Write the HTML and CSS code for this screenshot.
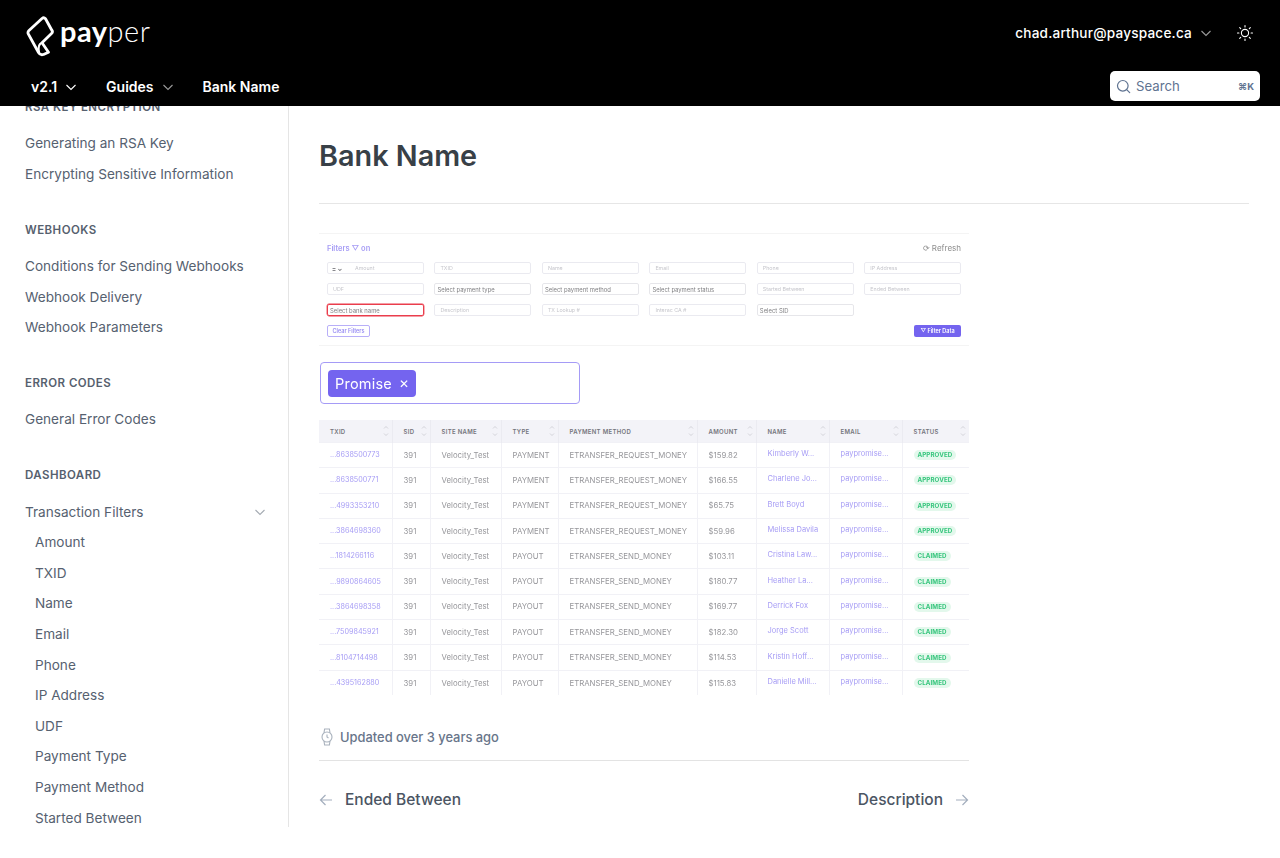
FILE: index.html
```html
<!DOCTYPE html>
<html lang="en">
<head>
  <meta charset="UTF-8">
  <title>Bank Name</title>
  <link rel="stylesheet" href="styles.css">
</head>
<body>
  <svg class="sprite" width="0" height="0">
    <symbol id="chev" viewBox="0 0 12 12"><path d="M1.5 4l4.500 4.500L10.500 4" fill="none" stroke="currentColor" stroke-width="1.100"/></symbol>
    <symbol id="sort" viewBox="0 0 6 14"><path d="M1 4.500L3 2.500l2 2M1 9.500l2 2 2-2" fill="none" stroke="currentColor" stroke-width=".6"/></symbol>
  </svg>

  <header class="topbar">
    <div class="topbar-row">
      <a class="logo">
        <svg class="logo-mark" width="29" height="41" viewBox="0 0 29 41">
          <path d="M16 2.500L3 14.500c-1.200 1.200-1.300 2.400-.6 3.700L12.500 36.500c1.300 2.200 2.800 2.700 5 2l5-2.300-6.500-9.500 9.500-9.200c1.300-1.200 1.200-2.300.2-3.500L19.500 2.800c-1.100-1.200-2.300-1.300-3.500-.3z" fill="none" stroke="#fff" stroke-width="2.800" stroke-linejoin="round"/>
          <path d="M16 26.700c-3 1-4.300 3.500-3 9.800" fill="none" stroke="#fff" stroke-width="2.200"/>
        </svg>
        <span class="logo-text"><b>pay</b>per</span>
      </a>
      <div class="account">
        <span class="email">chad.arthur@payspace.ca</span>
        <svg class="chev-sm" width="12" height="12"><use href="#chev"/></svg>
        <svg class="sun" width="18" height="18" viewBox="0 0 18 18" fill="none" stroke="#fff" stroke-width="1.100" stroke-linecap="round">
          <circle cx="9" cy="9" r="3.600"/>
          <path d="M9 1.500v1.400M9 15.100v1.400M1.500 9h1.400M15.100 9h1.400M3.700 3.700l1 1M13.300 13.300l1 1M3.700 14.300l1-1M13.300 4.700l1-1"/>
        </svg>
      </div>
    </div>
    <div class="topbar-row nav-row">
      <nav class="nav">
        <a class="nav-item">v2.1 <svg width="12" height="12"><use href="#chev"/></svg></a>
        <a class="nav-item">Guides <svg class="dim" width="12" height="12"><use href="#chev"/></svg></a>
        <a class="nav-item">Bank Name</a>
      </nav>
      <div class="search">
        <svg width="15" height="15" viewBox="0 0 15 15" fill="none" stroke="#5f7391" stroke-width="1.200" stroke-linecap="round"><circle cx="6.800" cy="6.800" r="5.300"/><path d="M10.700 10.700l3 3"/></svg>
        <span class="search-label">Search</span>
        <span class="search-key">⌘K</span>
      </div>
    </div>
  </header>

  <div id="container">
    <aside id="sidebar">
      <div class="side-inner">
        <section class="side-group">
          <h4>RSA Key Encryption</h4>
          <a>Generating an RSA Key</a>
          <a>Encrypting Sensitive Information</a>
        </section>
        <section class="side-group">
          <h4>Webhooks</h4>
          <a>Conditions for Sending Webhooks</a>
          <a>Webhook Delivery</a>
          <a>Webhook Parameters</a>
        </section>
        <section class="side-group">
          <h4>Error Codes</h4>
          <a>General Error Codes</a>
        </section>
        <section class="side-group">
          <h4>Dashboard</h4>
          <a class="side-parent">Transaction Filters <svg width="12" height="12"><use href="#chev"/></svg></a>
          <div class="side-sub">
            <a>Amount</a>
            <a>TXID</a>
            <a>Name</a>
            <a>Email</a>
            <a>Phone</a>
            <a>IP Address</a>
            <a>UDF</a>
            <a>Payment Type</a>
            <a>Payment Method</a>
            <a>Started Between</a>
          </div>
        </section>
      </div>
    </aside>

    <main id="content">
      <h1>Bank Name</h1>
      <hr class="title-rule">

      <div class="shot">
        <div class="filters">
          <div class="filters-head">
            <span class="filters-title">Filters ▽ on</span>
            <span class="refresh">⟳ Refresh</span>
          </div>
          <div class="filters-grid">
            <div class="fld split"><span class="op">= ⌄</span><span class="ph">Amount</span></div>
            <div class="fld"><span class="ph">TXID</span></div>
            <div class="fld"><span class="ph">Name</span></div>
            <div class="fld"><span class="ph">Email</span></div>
            <div class="fld"><span class="ph">Phone</span></div>
            <div class="fld"><span class="ph">IP Address</span></div>
            <div class="fld"><span class="ph">UDF</span></div>
            <div class="fld sel">Select payment type</div>
            <div class="fld sel">Select payment method</div>
            <div class="fld sel">Select payment status</div>
            <div class="fld"><span class="ph">Started Between</span></div>
            <div class="fld"><span class="ph">Ended Between</span></div>
            <div class="fld sel marked">Select bank name</div>
            <div class="fld"><span class="ph">Description</span></div>
            <div class="fld"><span class="ph">TX Lookup #</span></div>
            <div class="fld"><span class="ph">Interac CA #</span></div>
            <div class="fld sel">Select SID</div>
          </div>
          <div class="filters-actions">
            <span class="btn-outline">Clear Filters</span>
            <span class="btn-solid">▽ Filter Data</span>
          </div>
        </div>

        <div class="tag-box">
          <span class="tag">Promise <i>✕</i></span>
        </div>

        <table class="txn">
          <colgroup>
            <col class="c1"><col class="c2"><col class="c3"><col class="c4"><col class="c5"><col class="c6"><col class="c7"><col class="c8"><col class="c9">
          </colgroup>
          <thead>
            <tr>
              <th>TXID<svg width="6" height="14"><use href="#sort"/></svg></th>
              <th>SID<svg width="6" height="14"><use href="#sort"/></svg></th>
              <th>SITE NAME<svg width="6" height="14"><use href="#sort"/></svg></th>
              <th>TYPE<svg width="6" height="14"><use href="#sort"/></svg></th>
              <th>PAYMENT METHOD<svg width="6" height="14"><use href="#sort"/></svg></th>
              <th>AMOUNT<svg width="6" height="14"><use href="#sort"/></svg></th>
              <th>NAME<svg width="6" height="14"><use href="#sort"/></svg></th>
              <th>EMAIL<svg width="6" height="14"><use href="#sort"/></svg></th>
              <th>STATUS<svg width="6" height="14"><use href="#sort"/></svg></th>
            </tr>
          </thead>
          <tbody>
            <tr><td class="lnk">...8638500773</td><td>391</td><td>Velocity_Test</td><td>PAYMENT</td><td>ETRANSFER_REQUEST_MONEY</td><td>$159.82</td><td class="lnk up">Kimberly W...</td><td class="lnk up">paypromise...</td><td><span class="badge">APPROVED</span></td></tr>
            <tr><td class="lnk">...8638500771</td><td>391</td><td>Velocity_Test</td><td>PAYMENT</td><td>ETRANSFER_REQUEST_MONEY</td><td>$166.55</td><td class="lnk up">Charlene Jo...</td><td class="lnk up">paypromise...</td><td><span class="badge">APPROVED</span></td></tr>
            <tr><td class="lnk">...4993353210</td><td>391</td><td>Velocity_Test</td><td>PAYMENT</td><td>ETRANSFER_REQUEST_MONEY</td><td>$65.75</td><td class="lnk up">Brett Boyd</td><td class="lnk up">paypromise...</td><td><span class="badge">APPROVED</span></td></tr>
            <tr><td class="lnk">...3864698360</td><td>391</td><td>Velocity_Test</td><td>PAYMENT</td><td>ETRANSFER_REQUEST_MONEY</td><td>$59.96</td><td class="lnk up">Melissa Davila</td><td class="lnk up">paypromise...</td><td><span class="badge">APPROVED</span></td></tr>
            <tr><td class="lnk">...1814266116</td><td>391</td><td>Velocity_Test</td><td>PAYOUT</td><td>ETRANSFER_SEND_MONEY</td><td>$103.11</td><td class="lnk up">Cristina Law...</td><td class="lnk up">paypromise...</td><td><span class="badge">CLAIMED</span></td></tr>
            <tr><td class="lnk">...9890864605</td><td>391</td><td>Velocity_Test</td><td>PAYOUT</td><td>ETRANSFER_SEND_MONEY</td><td>$180.77</td><td class="lnk up">Heather La...</td><td class="lnk up">paypromise...</td><td><span class="badge">CLAIMED</span></td></tr>
            <tr><td class="lnk">...3864698358</td><td>391</td><td>Velocity_Test</td><td>PAYOUT</td><td>ETRANSFER_SEND_MONEY</td><td>$169.77</td><td class="lnk up">Derrick Fox</td><td class="lnk up">paypromise...</td><td><span class="badge">CLAIMED</span></td></tr>
            <tr><td class="lnk">...7509845921</td><td>391</td><td>Velocity_Test</td><td>PAYOUT</td><td>ETRANSFER_SEND_MONEY</td><td>$182.30</td><td class="lnk up">Jorge Scott</td><td class="lnk up">paypromise...</td><td><span class="badge">CLAIMED</span></td></tr>
            <tr><td class="lnk">...8104714498</td><td>391</td><td>Velocity_Test</td><td>PAYOUT</td><td>ETRANSFER_SEND_MONEY</td><td>$114.53</td><td class="lnk up">Kristin Hoff...</td><td class="lnk up">paypromise...</td><td><span class="badge">CLAIMED</span></td></tr>
            <tr><td class="lnk">...4395162880</td><td>391</td><td>Velocity_Test</td><td>PAYOUT</td><td>ETRANSFER_SEND_MONEY</td><td>$115.83</td><td class="lnk up">Danielle Mill...</td><td class="lnk up">paypromise...</td><td><span class="badge">CLAIMED</span></td></tr>
          </tbody>
        </table>
      </div>

      <div class="updated">
        <svg width="14" height="18" viewBox="0 0 14 18" fill="none" stroke="#a9b2bd" stroke-width="1.100"><circle cx="7" cy="9" r="5"/><path d="M4 4.800L4.600 1h4.800L10 4.800M4 13.200l.6 3.800h4.800l.6-3.800M7 6.500V9l1.500 1"/></svg>
        <span>Updated over 3 years ago</span>
      </div>
      <nav class="pager">
        <a class="pager-link">
          <svg width="14" height="14" viewBox="0 0 14 14" fill="none" stroke="#a3aebd" stroke-width="1.200"><path d="M13 7H1.500M6.500 2L1.500 7l5 5"/></svg>
          Ended Between
        </a>
        <a class="pager-link">
          Description
          <svg width="14" height="14" viewBox="0 0 14 14" fill="none" stroke="#a3aebd" stroke-width="1.200"><path d="M1 7h11.500M7.500 2l5 5-5 5"/></svg>
        </a>
      </nav>
    </main>
  </div>
</body>
</html>
```

FILE: styles.css
```css
body, html {
  margin: 0;
  padding: 0;
  height: 100%;
  width: 100%;
  overflow: hidden;
  background: #fff;
  font-family: 'Inter', 'Liberation Sans', sans-serif;
}
.sprite {
  display: block;
  height: 0;
}

/* top bar */
.topbar {
  background: #000;
  color: #fff;
  height: 106px;
  position: relative;
  z-index: 2;
}
.topbar-row {
  display: flex;
  align-items: center;
  justify-content: space-between;
  height: 66px;
  padding: 0 26px 0 26px;
}
.nav-row {
  height: 40px;
  padding: 0 20px 0 31px;
}
.logo {
  display: flex;
  align-items: flex-start;
  gap: 5px;
  height: 54px;
  padding-top: 10px;
  box-sizing: border-box;
}
.logo-text {
  font-family: 'Lato', sans-serif;
  font-size: 29px;
  font-weight: 300;
  line-height: 30px;
  letter-spacing: .5px;
}
.logo-text b {
  font-weight: 700;
}
.account {
  display: flex;
  align-items: center;
}
.email {
  font-size: 13.600px;
  font-weight: 500;
  letter-spacing: .2px;
}
.chev-sm {
  color: #9a9a9a;
  margin-left: 8px;
}
.sun {
  margin-left: 24px;
}
.nav {
  display: flex;
  gap: 29px;
  padding-top: 2px;
}
.nav-item {
  display: flex;
  align-items: center;
  gap: 8px;
  font-size: 14px;
  font-weight: 600;
  line-height: 40px;
}
.nav-item .dim {
  color: #9a9a9a;
}
.search {
  display: flex;
  align-items: center;
  box-sizing: border-box;
  width: 150px;
  height: 30px;
  background: #fff;
  border-radius: 5px;
  padding: 0 6px;
}
.search-label {
  margin-left: 5px;
  font-size: 13.200px;
  color: #5f7391;
  flex: 1;
}
.search-key {
  font-size: 9.500px;
  font-weight: 700;
  color: #5f7391;
}

/* page body */
#container {
  display: flex;
  height: 721px;
}
#sidebar {
  width: 288px;
  flex: none;
  border-right: 1px solid #e5e5e5;
  overflow: hidden;
}
.side-inner {
  margin-top: -8.200px;
  padding: 0 22px 0 25px;
}
.side-group {
  margin-bottom: 31.100px;
}
.side-group h4 {
  margin: 0 0 12.500px;
  font-size: 11.500px;
  line-height: 18px;
  font-weight: 600;
  letter-spacing: .45px;
  text-transform: uppercase;
  color: #56606e;
}
.side-group a {
  display: block;
  font-size: 13.600px;
  line-height: 30.600px;
  color: #566170;
}
.side-group .side-parent {
  display: flex;
  align-items: center;
  justify-content: space-between;
}
.side-parent svg {
  color: #a5abb3;
}
.side-sub {
  padding-left: 10px;
}

/* article */
#content {
  flex: 1;
  padding: 32px 31px 0 30px;
  overflow: hidden;
}
h1 {
  margin: 0;
  font-size: 28.800px;
  line-height: 36px;
  font-weight: 600;
  color: #384047;
}
.title-rule {
  margin: 29px 0 29px;
  border: none;
  border-top: 1px solid #e6e6e6;
}

/* the embedded dashboard capture */
.shot {
  width: 650px;
  font-family: 'Inter', sans-serif;
  filter: blur(.45px);
}
.filters {
  border-top: 1px solid #f4f4f4;
  border-bottom: 1px solid #f4f4f4;
  padding: 8px 8px 8px;
}
.filters-head {
  display: flex;
  align-items: center;
  justify-content: space-between;
  height: 12px;
  margin-bottom: 8px;
}
.filters-title {
  font-size: 7.500px;
  font-weight: 600;
  color: #a79df5;
}
.refresh {
  font-size: 8px;
  color: #8d8d8d;
}
.filters-grid {
  display: grid;
  grid-template-columns: repeat(6, 1fr);
  grid-auto-rows: 12px;
  gap: 9px 10.800px;
}
.fld {
  display: flex;
  align-items: center;
  box-sizing: border-box;
  border: 1px solid #eaeaf0;
  border-radius: 2px;
  padding-left: 5px;
  font-size: 5.900px;
  white-space: nowrap;
  overflow: hidden;
}
.fld .ph {
  font-size: 5.300px;
  color: #c6c6cc;
}
.fld.sel {
  padding-left: 2px;
  color: #818184;
  border-color: #e6e6ea;
}
.fld.marked {
  border: 1px solid #ea3d4c;
  box-shadow: 0 0 0 .4px #ea3d4c;
}
.fld.split {
  padding-left: 4px;
}
.op {
  width: 19px;
  margin-right: 4px;
  color: #66666c;
  font-size: 6px;
  font-weight: 700;
}
.filters-actions {
  display: flex;
  justify-content: space-between;
  height: 12px;
  margin-top: 9px;
}
.btn-outline, .btn-solid {
  display: flex;
  align-items: center;
  justify-content: center;
  box-sizing: border-box;
  border-radius: 2px;
  font-size: 5.500px;
  font-weight: 600;
}
.btn-outline {
  width: 43px;
  border: 1px solid #b8aff8;
  color: #9a8ff3;
}
.btn-solid {
  width: 47px;
  background: #7464ef;
  color: #fff;
}
.tag-box {
  display: flex;
  align-items: center;
  box-sizing: border-box;
  width: 260px;
  height: 42px;
  margin: 16px 0 16px 1px;
  padding-left: 7px;
  border: 1.500px solid #a59bf6;
  border-radius: 4px;
}
.tag {
  display: flex;
  align-items: center;
  gap: 7px;
  height: 27px;
  padding: 0 7px;
  background: #7464ef;
  border-radius: 4px;
  color: #fff;
  font-size: 14.500px;
  letter-spacing: .2px;
}
.tag i {
  font-style: normal;
  font-size: 12px;
}
.txn {
  width: 650px;
  table-layout: fixed;
  border-collapse: collapse;
  font-size: 7.800px;
  color: #97979b;
}
.c1 { width: 73px; }
.c2 { width: 38px; }
.c3 { width: 71px; }
.c4 { width: 57px; }
.c5 { width: 139px; }
.c6 { width: 59px; }
.c7 { width: 73px; }
.c8 { width: 73px; }
.c9 { width: 67px; }
.txn th {
  position: relative;
  height: 22px;
  padding: 0 0 0 11px;
  background: #f3f3f8;
  border-right: 1px solid #ebebf1;
  font-size: 6px;
  font-weight: 600;
  letter-spacing: .3px;
  text-align: left;
  color: #75757c;
}
.txn th svg {
  position: absolute;
  right: 3px;
  top: 4px;
  color: #bdbdc4;
}
.txn td {
  height: 25.300px;
  padding: 0 0 1px 11px;
  box-sizing: border-box;
  border-top: 1px solid #f1f1f6;
  border-right: 1px solid #f1f1f6;
  white-space: nowrap;
  overflow: hidden;
}
.txn tr > :last-child {
  border-right: none;
}
.txn .lnk {
  color: #a79df5;
  font-size: 7.200px;
}
.txn .up {
  padding-bottom: 3px;
  font-size: 7.500px;
}
.badge {
  display: inline-block;
  padding: 0 4px;
  background: #e3f8ec;
  border-radius: 5px;
  color: #35c57c;
  font-size: 6.200px;
  font-weight: 700;
  line-height: 10px;
  letter-spacing: .1px;
}

/* footer of the article */
.updated {
  display: flex;
  align-items: center;
  gap: 6px;
  width: 650px;
  height: 18px;
  margin-top: 33px;
  padding-left: 1px;
  box-sizing: border-box;
  font-size: 12.900px;
  font-weight: 500;
  color: #68758a;
}
.pager {
  display: flex;
  justify-content: space-between;
  box-sizing: border-box;
  width: 650px;
  margin-top: 14px;
  padding-top: 29px;
  border-top: 1px solid #e3e3e3;
}
.pager-link {
  display: flex;
  align-items: center;
  gap: 12px;
  font-size: 15.500px;
  font-weight: 500;
  line-height: 20px;
  color: #4b5563;
}
```
